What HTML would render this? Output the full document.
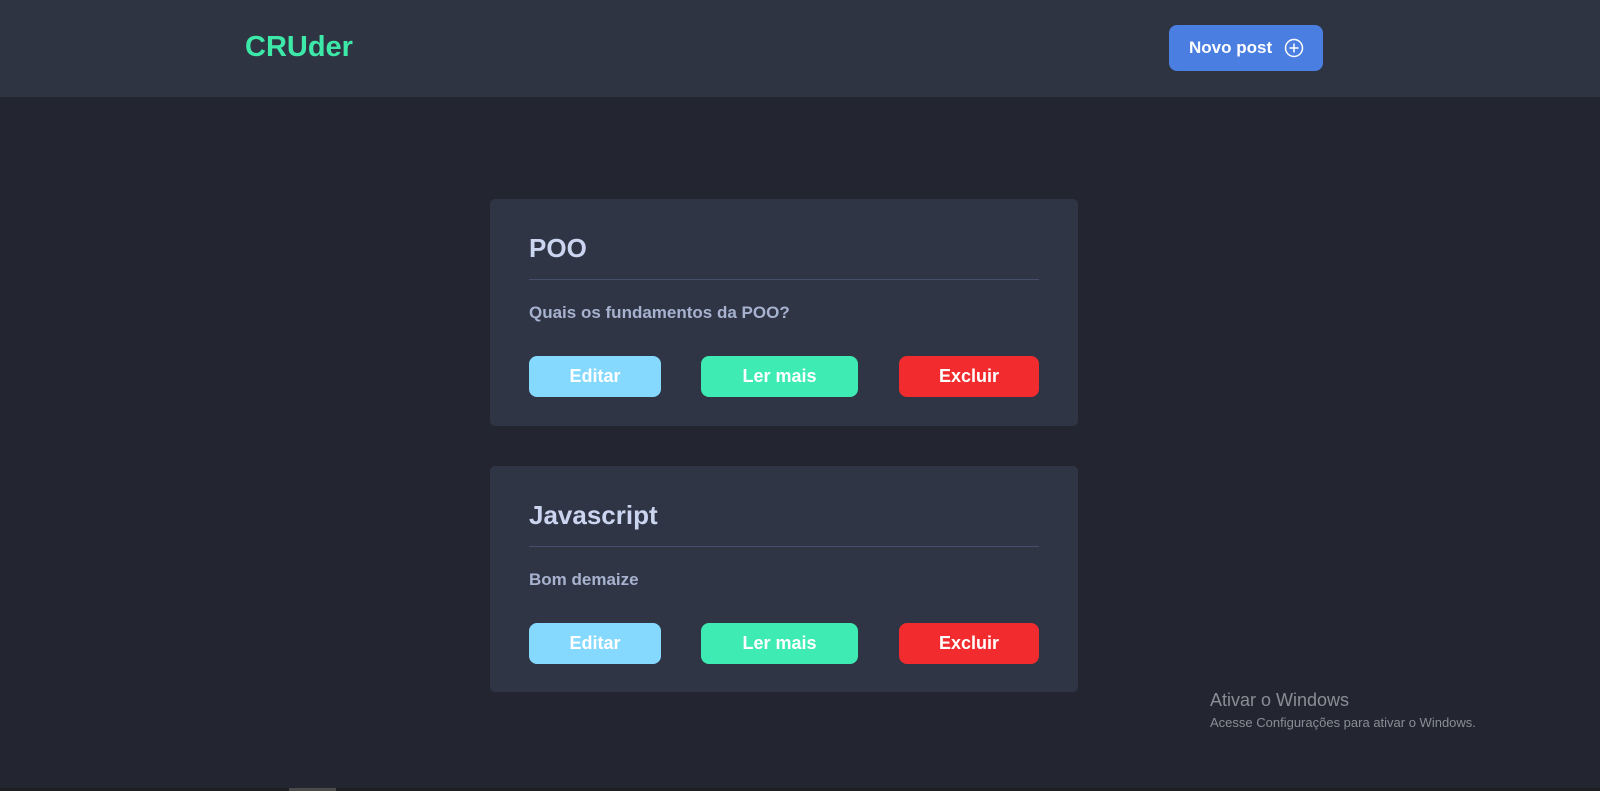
<!DOCTYPE html>
<html><head><style>
body{margin:0;width:1600px;height:791px;background:#232631;font-family:"Liberation Sans",sans-serif;position:relative;overflow:hidden}
.hdr{position:absolute;left:0;top:0;width:1600px;height:97px;background:#2e3441}
.logo{position:absolute;left:245px;top:31px;color:#3de9a9;font-weight:bold;font-size:29px}
.np{position:absolute;left:1169px;top:25px;width:154px;height:46px;background:#4a7ee0;border-radius:8px;color:#fff;font-weight:bold;font-size:17px;box-sizing:border-box;padding:13px 0 0 20px}
.np svg{position:absolute;left:115px;top:13px}
.card{position:absolute;left:490px;width:588px;background:#2f3545;border-radius:5px}
.t{position:absolute;left:39px;top:34px;font-size:26px;font-weight:bold;color:#cbd5ef}
.line{position:absolute;left:39px;top:80px;width:510px;height:1px;background:#464e6e}
.d{position:absolute;left:39px;top:104px;font-size:17px;font-weight:bold;color:#a7b2cf}
.b{position:absolute;top:157px;height:41px;border-radius:8px;color:#fff;font-weight:bold;font-size:18px;text-align:center;line-height:41px}
.w1{position:absolute;left:1210px;top:690px;color:#8a8d95;font-size:18px}
.w2{position:absolute;left:1210px;top:715px;color:#8a8d95;font-size:13px}
</style></head><body>
<div class="hdr"><div class="logo">CRUder</div>
<div class="np">Novo post<svg width="20" height="20" viewBox="0 0 20 20"><circle cx="10" cy="10" r="8.5" fill="none" stroke="#fff" stroke-width="1.5"/><path d="M10 5.5v9M5.5 10h9" stroke="#fff" stroke-width="1.5"/></svg></div></div>
<div class="card" style="top:199px;height:227px"><div class="t">POO</div><div class="line"></div><div class="d">Quais os fundamentos da POO?</div>
<div class="b" style="left:39px;width:132px;background:#85d8fe">Editar</div>
<div class="b" style="left:211px;width:157px;background:#3eebb2">Ler mais</div>
<div class="b" style="left:409px;width:140px;background:#f22c2e">Excluir</div></div>
<div class="card" style="top:466px;height:226px"><div class="t">Javascript</div><div class="line"></div><div class="d">Bom demaize</div>
<div class="b" style="left:39px;width:132px;background:#85d8fe">Editar</div>
<div class="b" style="left:211px;width:157px;background:#3eebb2">Ler mais</div>
<div class="b" style="left:409px;width:140px;background:#f22c2e">Excluir</div></div>
<div class="w1">Ativar o Windows</div><div class="w2">Acesse Configurações para ativar o Windows.</div>
<div style="position:absolute;left:0;top:788px;width:1600px;height:3px;background:#1d1f22"></div>
<div style="position:absolute;left:289px;top:788px;width:47px;height:3px;background:#4a4a4a"></div>
</body></html>
